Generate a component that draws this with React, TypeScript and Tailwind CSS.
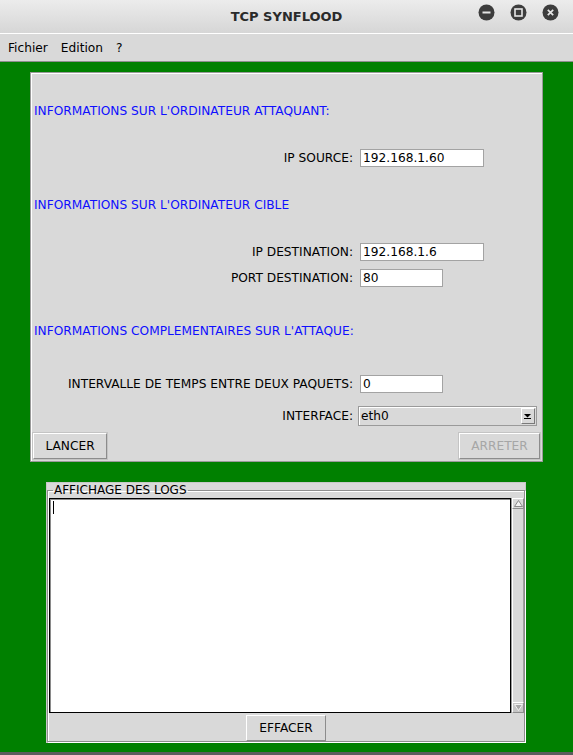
import React from "react";

const font = { fontFamily: '"DejaVu Sans", sans-serif' };

function Field({ label, value, width }: { label: string; value: string; width: string }) {
  return (
    <div className="flex h-[18px] items-center">
      <span className="w-[322px] text-right">{label}</span>
      <div className={`ml-[7px] flex h-[18px] items-center border border-[#a3a3a3] bg-white pl-[2px] ${width}`}>{value}</div>
    </div>
  );
}

function Button({ children, disabled }: { children: React.ReactNode; disabled?: boolean }) {
  return (
    <div
      className={`flex h-[26px] items-center justify-center border border-b-[#8c8c8c] border-l-white border-r-[#8c8c8c] border-t-white bg-[#d9d9d9] shadow-[0_0_0_1px_#c4c4c4] ${
        disabled ? "w-[81px] text-[#a6a6a6]" : "w-[74px] text-black"
      }`}
    >
      {children}
    </div>
  );
}

function TitleButton({ kind }: { kind: "min" | "max" | "close" }) {
  return (
    <svg width="17" height="17" viewBox="0 0 17 17">
      <circle cx="8.5" cy="8.5" r="8" fill="#3d3d3d" />
      {kind === "min" && <rect x="4.5" y="7.5" width="8" height="2" fill="#e6e6e6" />}
      {kind === "max" && <rect x="5" y="5" width="7" height="7" fill="none" stroke="#e6e6e6" strokeWidth="1.6" />}
      {kind === "close" && (
        <path d="M5.8 5.8 L11.2 11.2 M11.2 5.8 L5.8 11.2" stroke="#e6e6e6" strokeWidth="1.7" />
      )}
    </svg>
  );
}

export default function App() {
  return (
    <div className="flex h-[755px] w-[573px] flex-col overflow-hidden bg-[#008000] text-[12.2px] leading-[14px] text-black" style={font}>
      {/* barre de titre */}
      <div className="relative flex h-[33px] shrink-0 items-center justify-center bg-gradient-to-b from-[#ececec] to-[#d6d6d6]">
        <span className="text-[13px] font-bold text-[#2a2a2a]">TCP SYNFLOOD</span>
        <div className="absolute right-[14px] top-[4px] flex gap-[15px]">
          <TitleButton kind="min" />
          <TitleButton kind="max" />
          <TitleButton kind="close" />
        </div>
      </div>

      {/* menu */}
      <div className="flex h-[29px] shrink-0 items-center gap-[13px] border-t border-b border-b-[#8e8e8e] border-t-white bg-[#d9d9d9] pl-[8px]">
        <span>Fichier</span>
        <span>Edition</span>
        <span>?</span>
      </div>

      {/* panneau principal */}
      <div className="ml-[30px] mt-[10px] flex h-[390px] w-[513px] shrink-0 flex-col border border-[#9a9a9a] bg-[#d9d9d9] shadow-[inset_1px_1px_0_#ffffff]">
        <div className="h-[30px]" />
        <div className="flex h-[16px] items-center pl-[3px] text-[#0f0fff]">INFORMATIONS SUR L'ORDINATEUR ATTAQUANT:</div>
        <div className="h-[30px]" />
        <Field label="IP SOURCE:" value="192.168.1.60" width="w-[124px]" />
        <div className="h-[30px]" />
        <div className="flex h-[16px] items-center pl-[3px] text-[#0f0fff]">INFORMATIONS SUR L'ORDINATEUR CIBLE</div>
        <div className="h-[30px]" />
        <Field label="IP DESTINATION:" value="192.168.1.6" width="w-[124px]" />
        <div className="h-[8px]" />
        <Field label="PORT DESTINATION:" value="80" width="w-[83px]" />
        <div className="h-[36px]" />
        <div className="flex h-[16px] items-center pl-[3px] text-[#0f0fff]">INFORMATIONS COMPLEMENTAIRES SUR L'ATTAQUE:</div>
        <div className="h-[36px]" />
        <Field label="INTERVALLE DE TEMPS ENTRE DEUX PAQUETS:" value="0" width="w-[83px]" />
        <div className="h-[13px]" />
        <div className="flex h-[20px] items-center">
          <span className="w-[322px] text-right">INTERFACE:</span>
          <div className="ml-[5px] flex h-[20px] w-[179px] items-center justify-between border border-[#9a9a9a] bg-[#d9d9d9] pl-[2px] shadow-[inset_1px_1px_0_#ffffff]">
            <span>eth0</span>
            <div className="mr-[1px] flex h-[16px] w-[14px] items-center justify-center border border-b-[#7a7a7a] border-l-white border-r-[#7a7a7a] border-t-white bg-[#d9d9d9]">
              <svg width="8" height="6" viewBox="0 0 8 6">
                <path d="M0 1 H7 L3.5 4.5 Z" fill="#000" />
                <rect x="0" y="5" width="7" height="1" fill="#000" />
              </svg>
            </div>
          </div>
        </div>
        <div className="h-[7px]" />
        <div className="flex justify-between px-[2px]">
          <Button>LANCER</Button>
          <Button disabled>ARRETER</Button>
        </div>
      </div>

      {/* logs */}
      <div className="ml-[46px] mt-[20px] flex h-[261px] w-[480px] shrink-0 flex-col border border-[#c8c8c8] bg-[#d9d9d9]">
        <fieldset className="flex h-full flex-col border border-[#8e8e8e] shadow-[1px_1px_0_#ffffff,inset_1px_1px_0_#ffffff]">
          <legend className="ml-[5px] px-[1px] text-[12px] leading-[14px]">AFFICHAGE DES LOGS</legend>
          <div className="ml-[1px] mt-[1px] flex h-[216px]">
            <div className="relative flex-1 border border-black bg-white shadow-[inset_1px_1px_0_#8a8a8a]">
              <div className="absolute left-[3px] top-[2px] h-[13px] w-[1px] bg-black" />
            </div>
            <div className="flex w-[13px] flex-col border-l border-[#9a9a9a] bg-[#d9d9d9]">
              <div className="flex h-[11px] items-center justify-center border border-b-[#8e8e8e] border-l-white border-r-[#8e8e8e] border-t-white">
                <svg width="9" height="7" viewBox="0 0 9 7">
                  <path d="M4.5 0.5 L8.5 6.5 H0.5 Z" fill="#f2f2f2" stroke="#8a8a8a" strokeWidth="1" />
                </svg>
              </div>
              <div className="flex-1 border-x border-l-white border-r-[#a0a0a0]" />
              <div className="flex h-[11px] items-center justify-center border border-b-[#8e8e8e] border-l-white border-r-[#8e8e8e] border-t-white bg-[#c6c6c6]">
                <svg width="9" height="7" viewBox="0 0 9 7">
                  <path d="M0.5 0.5 H8.5 L4.5 6.5 Z" fill="#a8a8a8" stroke="#f2f2f2" strokeWidth="1" />
                </svg>
              </div>
            </div>
          </div>
          <div className="mt-[2px] flex justify-center">
            <div className="flex h-[26px] w-[80px] items-center justify-center border border-b-[#8c8c8c] border-l-white border-r-[#8c8c8c] border-t-white bg-[#d9d9d9]">
              EFFACER
            </div>
          </div>
        </fieldset>
      </div>

      <div className="flex-1" />
      <div className="h-[3px] shrink-0 bg-[#5c5c5c]" />
    </div>
  );
}
